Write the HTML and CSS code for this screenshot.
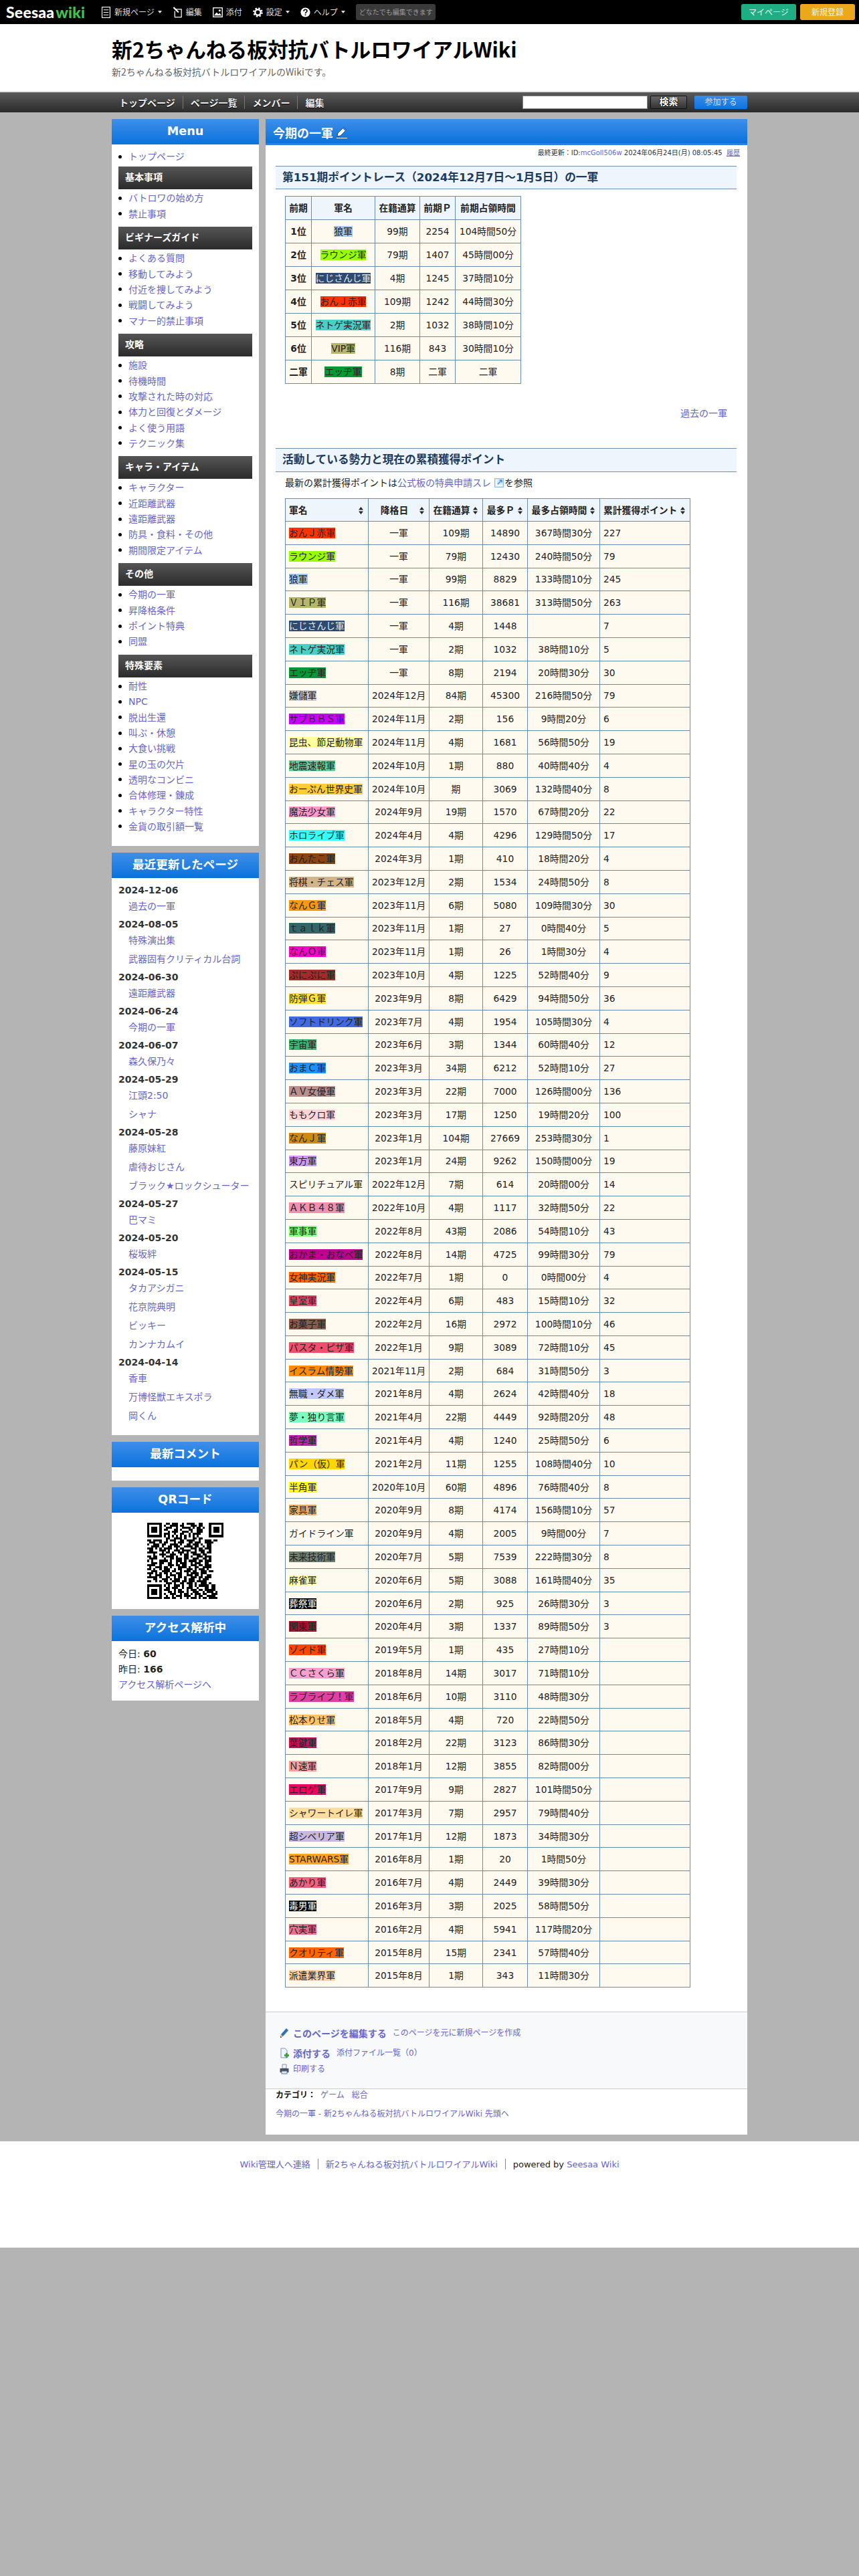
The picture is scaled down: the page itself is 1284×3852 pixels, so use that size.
FILE: index.html
```html
<!DOCTYPE html>
<html lang="ja">
<head>
<meta charset="utf-8">
<title>今期の一軍 - 新2ちゃんねる板対抗バトルロワイアルWiki</title>
<link rel="stylesheet" href="styles.css">
</head>
<body>
<header class="topbar">
  <a class="logo"><span class="logo-a">Seesaa</span><span class="logo-b">wiki</span></a>
  <nav class="tools">
    <a class="tool"><svg class="ti" viewBox="0 0 14 18"><rect x="0.7" y="0.7" width="12.6" height="16.6" fill="none" stroke="#fff" stroke-width="1.2"/><path d="M3 5h8M3 9h8M3 13h8" stroke="#fff" stroke-width="1.2"/></svg>新規ページ<i class="caret"></i></a>
    <a class="tool"><svg class="ti" viewBox="0 0 15 18"><path d="M5 4H13.5V16.5H3V7" fill="none" stroke="#fff" stroke-width="1.3"/><path d="M1 1l8 8" stroke="#fff" stroke-width="2.2"/></svg>編集</a>
    <a class="tool"><svg class="ti" viewBox="0 0 16 16"><rect x="0.8" y="0.8" width="14.4" height="14.4" fill="none" stroke="#fff" stroke-width="1.4"/><path d="M2 13l4-5 3 3 2-2 3 4z" fill="#fff"/><circle cx="11" cy="5" r="1.6" fill="#fff"/></svg>添付</a>
    <a class="tool"><svg class="ti" viewBox="0 0 18 18"><circle cx="9" cy="9" r="5" fill="none" stroke="#fff" stroke-width="3"/><circle cx="9" cy="9" r="7.5" fill="none" stroke="#fff" stroke-width="2.4" stroke-dasharray="3 2.9"/></svg>設定<i class="caret"></i></a>
    <a class="tool"><svg class="ti" viewBox="0 0 18 18"><circle cx="9" cy="9" r="8.5" fill="#fff"/><path d="M6 7c0-4 6-4 6-.5 0 2-3 2-3 4.500" fill="none" stroke="#000" stroke-width="2"/><rect x="8" y="12.500" width="2" height="2" fill="#000"/></svg>ヘルプ<i class="caret"></i></a>
    <span class="notice">どなたでも編集できます</span>
  </nav>
  <a class="btn btn-my">マイページ</a>
  <a class="btn btn-new">新規登録</a>
</header>

<div class="masthead">
  <h1 class="site-title">新2ちゃんねる板対抗バトルロワイアルWiki</h1>
  <p class="site-desc">新2ちゃんねる板対抗バトルロワイアルのWikiです。</p>
</div>

<div class="navbar">
  <div class="navbar-in">
    <a class="nav-item">トップページ</a><a class="nav-item">ページ一覧</a><a class="nav-item">メンバー</a><a class="nav-item nav-last">編集</a>
    <span class="nav-search"><span class="search-input"></span><span class="search-btn">検索</span><span class="join-btn">参加する</span></span>
  </div>
</div>

<div class="wrap">
  <aside class="side">
    <section class="panel">
      <h3 class="panel-h">Menu</h3>
      <div class="menu-body">
        <ul class="list first"><li><a>トップページ</a></li></ul>
        <h4 class="bar">基本事項</h4>
        <ul class="list"><li><a>バトロワの始め方</a></li><li><a>禁止事項</a></li></ul>
        <h4 class="bar">ビギナーズガイド</h4>
        <ul class="list"><li><a>よくある質問</a></li><li><a>移動してみよう</a></li><li><a>付近を捜してみよう</a></li><li><a>戦闘してみよう</a></li><li><a>マナー的禁止事項</a></li></ul>
        <h4 class="bar">攻略</h4>
        <ul class="list"><li><a>施設</a></li><li><a>待機時間</a></li><li><a>攻撃された時の対応</a></li><li><a>体力と回復とダメージ</a></li><li><a>よく使う用語</a></li><li><a>テクニック集</a></li></ul>
        <h4 class="bar">キャラ・アイテム</h4>
        <ul class="list"><li><a>キャラクター</a></li><li><a>近距離武器</a></li><li><a>遠距離武器</a></li><li><a>防具・食料・その他</a></li><li><a>期間限定アイテム</a></li></ul>
        <h4 class="bar">その他</h4>
        <ul class="list"><li><a>今期の一軍</a></li><li><a>昇降格条件</a></li><li><a>ポイント特典</a></li><li><a>同盟</a></li></ul>
        <h4 class="bar">特殊要素</h4>
        <ul class="list"><li><a>耐性</a></li><li><a>NPC</a></li><li><a>脱出生還</a></li><li><a>叫ぶ・休憩</a></li><li><a>大食い挑戦</a></li><li><a>星の玉の欠片</a></li><li><a>透明なコンビニ</a></li><li><a>合体修理・錬成</a></li><li><a>キャラクター特性</a></li><li><a>金貨の取引額一覧</a></li></ul>
      </div>
    </section>

    <section class="panel">
      <h3 class="panel-h">最近更新したページ</h3>
      <dl class="recent">
        <dt>2024-12-06</dt><dd><a>過去の一軍</a></dd>
        <dt>2024-08-05</dt><dd><a>特殊演出集</a></dd><dd><a>武器固有クリティカル台詞</a></dd>
        <dt>2024-06-30</dt><dd><a>遠距離武器</a></dd>
        <dt>2024-06-24</dt><dd><a>今期の一軍</a></dd>
        <dt>2024-06-07</dt><dd><a>森久保乃々</a></dd>
        <dt>2024-05-29</dt><dd><a>江頭2:50</a></dd><dd><a>シャナ</a></dd>
        <dt>2024-05-28</dt><dd><a>藤原妹紅</a></dd><dd><a>虐待おじさん</a></dd><dd><a>ブラック★ロックシューター</a></dd>
        <dt>2024-05-27</dt><dd><a>巴マミ</a></dd>
        <dt>2024-05-20</dt><dd><a>桜坂絆</a></dd>
        <dt>2024-05-15</dt><dd><a>タカアシガニ</a></dd><dd><a>花京院典明</a></dd><dd><a>ビッキー</a></dd><dd><a>カンナカムイ</a></dd>
        <dt>2024-04-14</dt><dd><a>香車</a></dd><dd><a>万博怪獣エキスポラ</a></dd><dd><a>岡くん</a></dd>
      </dl>
    </section>

    <section class="panel">
      <h3 class="panel-h">最新コメント</h3>
      <div class="empty-body"></div>
    </section>

    <section class="panel">
      <h3 class="panel-h">QRコード</h3>
      <div class="qr-body">
        <svg class="qr" viewBox="0 0 37 37" shape-rendering="crispEdges">
          <g fill="none" stroke="#000" stroke-width="1">
            <path d="M0 .5h7M30 .5h7M0 6.500h7M30 6.500h7M0 30.500h7M0 36.500h7M.5 1v5M6.500 1v5M30.500 1v5M36.500 1v5M.5 31v5M6.500 31v5M2 3.500h3M2 2.500h3M2 4.500h3M32 2.500h3M32 3.500h3M32 4.500h3M2 32.500h3M2 33.500h3M2 34.500h3"/>
            <path d="M9 .5h2m1 0h3m2 0h1m1 0h4m2 0h2M8 1.500h1m2 0h4m1 0h2m3 0h3m1 0h2M9 2.500h3m2 0h1m2 0h4m1 0h1m1 0h2m1 0h1M8 3.500h2m3 0h2m1 0h1m3 0h2m2 0h3M10 4.500h1m1 0h3m2 0h3m1 0h1m2 0h3M8 5.500h3m2 0h1m2 0h2m2 0h1m1 0h4M8 6.500h1m1 0h1m1 0h1m1 0h1m1 0h1m1 0h1m1 0h1m1 0h1m1 0h1M9 7.500h2m2 0h4m1 0h1m3 0h2m1 0h2"/>
            <path d="M0 8.500h2m1 0h4m2 0h1m1 0h3m2 0h2m1 0h4m2 0h1m2 0h3m1 0h2M1 9.500h3m2 0h1m1 0h2m3 0h1m1 0h3m2 0h2m1 0h3m2 0h4M0 10.500h1m2 0h3m1 0h2m2 0h4m1 0h1m2 0h2m1 0h3m1 0h1m2 0h2M2 11.500h4m1 0h1m2 0h2m1 0h3m2 0h4m1 0h2m2 0h1m1 0h2M0 12.500h3m1 0h1m1 0h1m1 0h4m2 0h1m1 0h2m3 0h3m1 0h2m1 0h3M1 13.500h2m3 0h3m1 0h1m2 0h3m1 0h4m2 0h1m1 0h3m2 0h1M0 14.500h5m2 0h1m1 0h2m1 0h1m2 0h3m1 0h1m1 0h3m2 0h2m1 0h2M3 15.500h1m2 0h3m2 0h3m2 0h1m1 0h2m2 0h4m1 0h2M0 16.500h2m1 0h2m2 0h1m1 0h4m1 0h1m3 0h2m1 0h1m2 0h3m1 0h3M1 17.500h4m3 0h1m2 0h2m1 0h3m1 0h2m2 0h3m2 0h2m1 0h1M0 18.500h1m1 0h1m3 0h4m1 0h1m2 0h3m1 0h1m1 0h4m1 0h2m1 0h3M2 19.500h3m1 0h2m2 0h2m2 0h1m1 0h3m2 0h1m1 0h3m2 0h2M0 20.500h4m2 0h1m3 0h3m1 0h2m1 0h2m2 0h3m1 0h2m1 0h3M1 21.500h1m2 0h3m1 0h2m1 0h1m3 0h4m1 0h1m2 0h2m2 0h4M0 22.500h2m1 0h1m2 0h1m1 0h3m2 0h1m1 0h2m2 0h3m1 0h1m1 0h3m1 0h1M2 23.500h3m2 0h4m1 0h2m2 0h1m1 0h3m1 0h2m2 0h3m1 0h2M0 24.500h3m1 0h1m1 0h1m1 0h2m1 0h1m2 0h3m2 0h1m1 0h4m1 0h3M1 25.500h1m2 0h3m2 0h1m1 0h3m1 0h2m2 0h3m1 0h2m1 0h1m2 0h2M0 26.500h5m1 0h1m2 0h2m2 0h1m1 0h2m1 0h1m2 0h3m1 0h2m1 0h3M3 27.500h2m2 0h3m1 0h1m1 0h3m2 0h1m1 0h3m2 0h1m1 0h3M0 28.500h2m2 0h1m1 0h1m1 0h2m2 0h4m1 0h2m1 0h3m1 0h5"/>
            <path d="M9 29.500h3m1 0h1m2 0h2m1 0h3m1 0h1m2 0h3m1 0h1M8 30.500h1m1 0h1m2 0h3m1 0h1m2 0h2m1 0h1m1 0h5m1 0h2M9 31.500h2m1 0h3m2 0h1m1 0h3m2 0h1m3 0h2m1 0h2M8 32.500h3m2 0h1m1 0h2m2 0h1m1 0h3m1 0h2m1 0h5M10 33.500h2m1 0h1m1 0h3m1 0h1m2 0h3m2 0h1m1 0h3m1 0h1M8 34.500h1m2 0h3m2 0h1m1 0h2m1 0h1m1 0h3m1 0h2m2 0h3M9 35.500h1m2 0h1m1 0h3m1 0h3m2 0h1m1 0h2m2 0h4M8 36.500h3m1 0h2m2 0h1m2 0h1m1 0h3m1 0h1m1 0h2m1 0h4"/>
          </g>
        </svg>
      </div>
    </section>

    <section class="panel">
      <h3 class="panel-h">アクセス解析中</h3>
      <div class="access">
        <p>今日: <b>60</b></p>
        <p>昨日: <b>166</b></p>
        <p><a>アクセス解析ページへ</a></p>
      </div>
    </section>
  </aside>

  <main class="main">
    <div class="main-h"><h2 class="main-title">今期の一軍</h2><svg class="pen" viewBox="0 0 16 18"><path d="M11 1l4 4-9 9-5 1 1-5z" fill="#fff" stroke="#17457a" stroke-width="1"/><path d="M11 1l4 4-2 2-4-4z" fill="#3f7fd0"/><path d="M0 17.500h16" stroke="#fff" stroke-width="1"/></svg></div>
    <div class="updated">最終更新&#xFF1A;ID:<a>mcGoll506w</a> 2024年06月24日(月) 08:05:45 &nbsp;<a class="u">履歴</a></div>
    <div class="content">
      <h2 class="sec">第151期ポイントレース&#xFF08;2024年12月7日&#xFF5E;1月5日&#xFF09;の一軍</h2>
      <table class="t t-first">
        <thead><tr><th>前期</th><th>軍名</th><th>在籍通算</th><th>前期&#xFF30;</th><th>前期占領時間</th></tr></thead>
        <tbody>
          <tr><td class="b">1位</td><td><span class="g g3">狼軍</span></td><td>99期</td><td>2254</td><td>104時間50分</td></tr>
          <tr><td class="b">2位</td><td><span class="g g2">ラウンジ軍</span></td><td>79期</td><td>1407</td><td>45時間00分</td></tr>
          <tr><td class="b">3位</td><td><span class="g g5">にじさんじ軍</span></td><td>4期</td><td>1245</td><td>37時間10分</td></tr>
          <tr><td class="b">4位</td><td><span class="g g1">おん&#xFF2A;赤軍</span></td><td>109期</td><td>1242</td><td>44時間30分</td></tr>
          <tr><td class="b">5位</td><td><span class="g g6">ネトゲ実況軍</span></td><td>2期</td><td>1032</td><td>38時間10分</td></tr>
          <tr><td class="b">6位</td><td><span class="g g4">VIP軍</span></td><td>116期</td><td>843</td><td>30時間10分</td></tr>
          <tr><td class="b">二軍</td><td><span class="g g7">エッヂ軍</span></td><td>8期</td><td>二軍</td><td>二軍</td></tr>
        </tbody>
      </table>
      <p class="past"><a>過去の一軍</a></p>
      <h2 class="sec sec-2">活動している勢力と現在の累積獲得ポイント</h2>
      <p class="intro">最新の累計獲得ポイントは<a>公式板の特典申請スレ</a><svg class="ext" viewBox="0 0 14 14"><rect x="0.5" y="0.5" width="13" height="13" fill="#cfe6f8" stroke="#8fc0ea"/><path d="M5 3H3v8h8V9" fill="none" stroke="#fff" stroke-width="1.500"/><path d="M5 9l6-6M7.500 3H11v3.500" fill="none" stroke="#4a90d9" stroke-width="1.500"/></svg>を参照</p>
      <table class="t t-rank">
        <thead><tr>
          <th class="th-l">軍名<svg class="sort" viewBox="0 0 7 11"><path d="M3.500 0l3.500 4.500H0zM3.500 11L0 6.500h7z"/></svg></th>
          <th>降格日<svg class="sort" viewBox="0 0 7 11"><path d="M3.500 0l3.500 4.500H0zM3.500 11L0 6.500h7z"/></svg></th>
          <th>在籍通算<svg class="sort" viewBox="0 0 7 11"><path d="M3.500 0l3.500 4.500H0zM3.500 11L0 6.500h7z"/></svg></th>
          <th>最多&#xFF30;<svg class="sort" viewBox="0 0 7 11"><path d="M3.500 0l3.500 4.500H0zM3.500 11L0 6.500h7z"/></svg></th>
          <th>最多占領時間<svg class="sort" viewBox="0 0 7 11"><path d="M3.500 0l3.500 4.500H0zM3.500 11L0 6.500h7z"/></svg></th>
          <th class="th-l">累計獲得ポイント<svg class="sort" viewBox="0 0 7 11"><path d="M3.500 0l3.500 4.500H0zM3.500 11L0 6.500h7z"/></svg></th>
        </tr></thead>
        <tbody>
<tr><td><span class="g g1">おん&#xFF2A;赤軍</span></td><td>一軍</td><td>109期</td><td>14890</td><td>367時間30分</td><td>227</td></tr>
<tr><td><span class="g g2">ラウンジ軍</span></td><td>一軍</td><td>79期</td><td>12430</td><td>240時間50分</td><td>79</td></tr>
<tr><td><span class="g g3">狼軍</span></td><td>一軍</td><td>99期</td><td>8829</td><td>133時間10分</td><td>245</td></tr>
<tr><td><span class="g g4">&#xFF36;&#xFF29;&#xFF30;軍</span></td><td>一軍</td><td>116期</td><td>38681</td><td>313時間50分</td><td>263</td></tr>
<tr><td><span class="g g5">にじさんじ軍</span></td><td>一軍</td><td>4期</td><td>1448</td><td></td><td>7</td></tr>
<tr><td><span class="g g6">ネトゲ実況軍</span></td><td>一軍</td><td>2期</td><td>1032</td><td>38時間10分</td><td>5</td></tr>
<tr><td><span class="g g7">エッヂ軍</span></td><td>一軍</td><td>8期</td><td>2194</td><td>20時間30分</td><td>30</td></tr>
<tr><td><span class="g g8">嫌儲軍</span></td><td>2024年12月</td><td>84期</td><td>45300</td><td>216時間50分</td><td>79</td></tr>
<tr><td><span class="g g9">サブ&#xFF22;&#xFF22;&#xFF33;軍</span></td><td>2024年11月</td><td>2期</td><td>156</td><td>9時間20分</td><td>6</td></tr>
<tr><td><span class="g g10">昆虫、節足動物軍</span></td><td>2024年11月</td><td>4期</td><td>1681</td><td>56時間50分</td><td>19</td></tr>
<tr><td><span class="g g11">地震速報軍</span></td><td>2024年10月</td><td>1期</td><td>880</td><td>40時間40分</td><td>4</td></tr>
<tr><td><span class="g g12">おーぷん世界史軍</span></td><td>2024年10月</td><td>期</td><td>3069</td><td>132時間40分</td><td>8</td></tr>
<tr><td><span class="g g13">魔法少女軍</span></td><td>2024年9月</td><td>19期</td><td>1570</td><td>67時間20分</td><td>22</td></tr>
<tr><td><span class="g g14">ホロライブ軍</span></td><td>2024年4月</td><td>4期</td><td>4296</td><td>129時間50分</td><td>17</td></tr>
<tr><td><span class="g g15">おんたこ軍</span></td><td>2024年3月</td><td>1期</td><td>410</td><td>18時間20分</td><td>4</td></tr>
<tr><td><span class="g g16">将棋・チェス軍</span></td><td>2023年12月</td><td>2期</td><td>1534</td><td>24時間50分</td><td>8</td></tr>
<tr><td><span class="g g17">なん&#xFF27;軍</span></td><td>2023年11月</td><td>6期</td><td>5080</td><td>109時間30分</td><td>30</td></tr>
<tr><td><span class="g g18">&#xFF54;&#xFF41;&#xFF4C;&#xFF4B;軍</span></td><td>2023年11月</td><td>1期</td><td>27</td><td>0時間40分</td><td>5</td></tr>
<tr><td><span class="g g19">なん&#xFF2F;軍</span></td><td>2023年11月</td><td>1期</td><td>26</td><td>1時間30分</td><td>4</td></tr>
<tr><td><span class="g g20">ぷにぷに軍</span></td><td>2023年10月</td><td>4期</td><td>1225</td><td>52時間40分</td><td>9</td></tr>
<tr><td><span class="g g21">防弾&#xFF27;軍</span></td><td>2023年9月</td><td>8期</td><td>6429</td><td>94時間50分</td><td>36</td></tr>
<tr><td><span class="g g22">ソフトドリンク軍</span></td><td>2023年7月</td><td>4期</td><td>1954</td><td>105時間30分</td><td>4</td></tr>
<tr><td><span class="g g23">宇宙軍</span></td><td>2023年6月</td><td>3期</td><td>1344</td><td>60時間40分</td><td>12</td></tr>
<tr><td><span class="g g24">おま&#xFF23;軍</span></td><td>2023年3月</td><td>34期</td><td>6212</td><td>52時間10分</td><td>27</td></tr>
<tr><td><span class="g g25">&#xFF21;&#xFF36;女優軍</span></td><td>2023年3月</td><td>22期</td><td>7000</td><td>126時間00分</td><td>136</td></tr>
<tr><td><span class="g g26">ももクロ軍</span></td><td>2023年3月</td><td>17期</td><td>1250</td><td>19時間20分</td><td>100</td></tr>
<tr><td><span class="g g27">なん&#xFF2A;軍</span></td><td>2023年1月</td><td>104期</td><td>27669</td><td>253時間30分</td><td>1</td></tr>
<tr><td><span class="g g28">東方軍</span></td><td>2023年1月</td><td>24期</td><td>9262</td><td>150時間00分</td><td>19</td></tr>
<tr><td><span class="g">スピリチュアル軍</span></td><td>2022年12月</td><td>7期</td><td>614</td><td>20時間00分</td><td>14</td></tr>
<tr><td><span class="g g30">&#xFF21;&#xFF2B;&#xFF22;&#xFF14;&#xFF18;軍</span></td><td>2022年10月</td><td>4期</td><td>1117</td><td>32時間50分</td><td>22</td></tr>
<tr><td><span class="g g31">軍事軍</span></td><td>2022年8月</td><td>43期</td><td>2086</td><td>54時間10分</td><td>43</td></tr>
<tr><td><span class="g g32">おかま・おなべ軍</span></td><td>2022年8月</td><td>14期</td><td>4725</td><td>99時間30分</td><td>79</td></tr>
<tr><td><span class="g g33">女神実況軍</span></td><td>2022年7月</td><td>1期</td><td>0</td><td>0時間00分</td><td>4</td></tr>
<tr><td><span class="g g34">皇室軍</span></td><td>2022年4月</td><td>6期</td><td>483</td><td>15時間10分</td><td>32</td></tr>
<tr><td><span class="g g35">お菓子軍</span></td><td>2022年2月</td><td>16期</td><td>2972</td><td>100時間10分</td><td>46</td></tr>
<tr><td><span class="g g36">パスタ・ピザ軍</span></td><td>2022年1月</td><td>9期</td><td>3089</td><td>72時間10分</td><td>45</td></tr>
<tr><td><span class="g g37">イスラム情勢軍</span></td><td>2021年11月</td><td>2期</td><td>684</td><td>31時間50分</td><td>3</td></tr>
<tr><td><span class="g g38">無職・ダメ軍</span></td><td>2021年8月</td><td>4期</td><td>2624</td><td>42時間40分</td><td>18</td></tr>
<tr><td><span class="g g39">夢・独り言軍</span></td><td>2021年4月</td><td>22期</td><td>4449</td><td>92時間20分</td><td>48</td></tr>
<tr><td><span class="g g40">哲学軍</span></td><td>2021年4月</td><td>4期</td><td>1240</td><td>25時間50分</td><td>6</td></tr>
<tr><td><span class="g g41">パン&#xFF08;仮&#xFF09;軍</span></td><td>2021年2月</td><td>11期</td><td>1255</td><td>108時間40分</td><td>10</td></tr>
<tr><td><span class="g g42">半角軍</span></td><td>2020年10月</td><td>60期</td><td>4896</td><td>76時間40分</td><td>8</td></tr>
<tr><td><span class="g g43">家具軍</span></td><td>2020年9月</td><td>8期</td><td>4174</td><td>156時間10分</td><td>57</td></tr>
<tr><td><span class="g">ガイドライン軍</span></td><td>2020年9月</td><td>4期</td><td>2005</td><td>9時間00分</td><td>7</td></tr>
<tr><td><span class="g g45">未来技術軍</span></td><td>2020年7月</td><td>5期</td><td>7539</td><td>222時間30分</td><td>8</td></tr>
<tr><td><span class="g g46">麻雀軍</span></td><td>2020年6月</td><td>5期</td><td>3088</td><td>161時間40分</td><td>35</td></tr>
<tr><td><span class="g g47">葬祭軍</span></td><td>2020年6月</td><td>2期</td><td>925</td><td>26時間30分</td><td>3</td></tr>
<tr><td><span class="g g48">関東軍</span></td><td>2020年4月</td><td>3期</td><td>1337</td><td>89時間50分</td><td>3</td></tr>
<tr><td><span class="g g49">ゾイド軍</span></td><td>2019年5月</td><td>1期</td><td>435</td><td>27時間10分</td><td></td></tr>
<tr><td><span class="g g50">&#xFF23;&#xFF23;さくら軍</span></td><td>2018年8月</td><td>14期</td><td>3017</td><td>71時間10分</td><td></td></tr>
<tr><td><span class="g g51">ラブライブ&#xFF01;軍</span></td><td>2018年6月</td><td>10期</td><td>3110</td><td>48時間30分</td><td></td></tr>
<tr><td><span class="g g52">松本りせ軍</span></td><td>2018年5月</td><td>4期</td><td>720</td><td>22時間50分</td><td></td></tr>
<tr><td><span class="g g53">葉鍵軍</span></td><td>2018年2月</td><td>22期</td><td>3123</td><td>86時間30分</td><td></td></tr>
<tr><td><span class="g g54">&#xFF2E;速軍</span></td><td>2018年1月</td><td>12期</td><td>3855</td><td>82時間00分</td><td></td></tr>
<tr><td><span class="g g55">エロゲ軍</span></td><td>2017年9月</td><td>9期</td><td>2827</td><td>101時間50分</td><td></td></tr>
<tr><td><span class="g g56">シャワートイレ軍</span></td><td>2017年3月</td><td>7期</td><td>2957</td><td>79時間40分</td><td></td></tr>
<tr><td><span class="g g57">超シベリア軍</span></td><td>2017年1月</td><td>12期</td><td>1873</td><td>34時間30分</td><td></td></tr>
<tr><td><span class="g g58">STARWARS軍</span></td><td>2016年8月</td><td>1期</td><td>20</td><td>1時間50分</td><td></td></tr>
<tr><td><span class="g g59">あかり軍</span></td><td>2016年7月</td><td>4期</td><td>2449</td><td>39時間30分</td><td></td></tr>
<tr><td><span class="g g47">毒男軍</span></td><td>2016年3月</td><td>3期</td><td>2025</td><td>58時間50分</td><td></td></tr>
<tr><td><span class="g g61">穴実軍</span></td><td>2016年2月</td><td>4期</td><td>5941</td><td>117時間20分</td><td></td></tr>
<tr><td><span class="g g62">クオリティ軍</span></td><td>2015年8月</td><td>15期</td><td>2341</td><td>57時間40分</td><td></td></tr>
<tr><td><span class="g g63">派遣業界軍</span></td><td>2015年8月</td><td>1期</td><td>343</td><td>11時間30分</td><td></td></tr>
        </tbody>
      </table>
    </div>
    <div class="edit-box">
      <div class="edit-row er-1"><svg class="ei" viewBox="0 0 14 16"><path d="M10 1l3 3-8 9-4 2 1-5z" fill="#2f6fc4"/><path d="M1 15l1-5 3 3z" fill="#e8c08a"/><path d="M1 15l.5-2 1.500 1.500z" fill="#000"/></svg><a class="big">このページを編集する</a><a class="small">このページを元に新規ページを作成</a></div>
      <div class="edit-row er-2"><svg class="ei" viewBox="0 0 14 16"><path d="M2 1h6l3 3v11H2z" fill="#eef4fa" stroke="#7f97b5"/><rect x="7" y="10" width="7" height="3" fill="#3aa83a"/><rect x="9" y="8" width="3" height="7" fill="#3aa83a"/></svg><a class="big">添付する</a><a class="small">添付ファイル一覧&#xFF08;0&#xFF09;</a></div>
      <div class="edit-row er-3"><svg class="ei" viewBox="0 0 14 16"><path d="M4 1h6v6H4z" fill="#eef4fa" stroke="#7f97b5"/><rect x="0.500" y="7" width="13" height="6" fill="#4a4f59"/><rect x="3" y="11" width="8" height="4" fill="#dfe7ef" stroke="#5b7fa8"/></svg><a class="small">印刷する</a></div>
    </div>
    <div class="page-foot">
      <p class="cats"><b>カテゴリ&#xFF1A;</b><a>ゲーム</a><a>総合</a></p>
      <p class="toplink"><a>今期の一軍 - 新2ちゃんねる板対抗バトルロワイアルWiki 先頭へ</a></p>
    </div>
  </main>
</div>

<footer class="footer">
  <a>Wiki管理人へ連絡</a><span class="fsep"></span><a>新2ちゃんねる板対抗バトルロワイアルWiki</a><span class="fsep"></span>powered by <a>Seesaa Wiki</a>
</footer>
</body>
</html>
```
FILE: styles.css
```css
* { box-sizing: border-box; }
html { background: #b4b4b4; }
body {
  margin: 0;
  background: #b4b4b4;
  color: #222;
  font-family: "DejaVu Sans", "Noto Sans CJK JP", sans-serif;
  font-size: 14px;
  line-height: 20px;
}
a { color: #6666cc; text-decoration: none; }
p, h1, h2, h3, h4, ul, dl, dd { margin: 0; padding: 0; }

/* top bar */
.topbar {
  height: 36px;
  background: #000;
  display: flex;
  align-items: center;
  padding: 0 6px 0 9px;
}
.logo { width: 142px; font-family: "Lato", sans-serif; font-weight: 900; font-size: 23px; letter-spacing: 0.2px; line-height: 36px; }
.logo-a { color: #fff; margin-right: 2px; }
.logo-b { color: #3fc64a; }
.tools { display: flex; align-items: center; flex: 1; font-family: "Noto Sans CJK JP", sans-serif; font-size: 12px; color: #ddd; }
.tool { display: flex; align-items: center; color: #ddd; margin-right: 16px; }
.ti { width: 15px; height: 17px; margin-right: 5px; }
.caret { width: 0; height: 0; border-left: 3.5px solid transparent; border-right: 3.5px solid transparent; border-top: 4px solid #ddd; margin-left: 5px; }
.notice { width: 119px; height: 24px; background: #3a3a3a; border-radius: 3px; color: #999; font-size: 10px; line-height: 24px; padding-left: 5px; white-space: nowrap; overflow: hidden; }
.btn { width: 82px; height: 24px; border-radius: 3px; color: #e8f5ef; font-family: "Noto Sans CJK JP", sans-serif; font-size: 12px; line-height: 24px; text-align: center; margin-left: 6px; }
.btn-my { background: #1fae84; }
.btn-new { background: #eca71a; }

/* masthead */
.masthead { height: 102px; background: #fff; border-bottom: 2px solid #e2e2e2; padding: 15px 0 0 167px; }
.site-title { font-family: "Noto Sans CJK JP", sans-serif; font-size: 30.7px; font-weight: 700; line-height: 44px; color: #000; white-space: nowrap; }
.site-desc { font-family: "Noto Sans CJK JP", sans-serif; font-size: 14px; line-height: 20px; margin-top: 2px; color: #666; }

/* nav */
.navbar { height: 30px; background: linear-gradient(#5a5a5a, #2a2a2a); }
.navbar-in { width: 950px; margin-left: 167px; height: 30px; display: flex; align-items: center; }
.nav-item { color: #eee; font-weight: 700; font-size: 14px; font-family: "Noto Sans CJK JP", sans-serif; line-height: 20px; padding: 0 11px; border-right: 1px solid #777; text-shadow: 0 1px 1px #000; }
.nav-last { border-right: 0; }
.nav-search { margin-left: auto; display: flex; }
.search-input { width: 187px; height: 20px; background: #fff; border: 1px solid #888; }
.search-btn { width: 55px; height: 20px; margin-left: 4px; background: linear-gradient(#666, #333); border: 1px solid #111; border-radius: 2px; color: #fff; font-weight: 700; font-size: 14px; line-height: 17px; text-align: center; text-shadow: 1px 0 0 #000, -1px 0 0 #000, 0 1px 0 #000; }
.join-btn { width: 79px; height: 20px; margin-left: 11px; background: linear-gradient(#3a8ce6, #0b74e0); border-radius: 2px; color: #dde; font-size: 12px; line-height: 20px; text-align: center; }

/* page grid */
.wrap { width: 950px; margin: 10px 0 0 167px; display: flex; gap: 10px; align-items: flex-start; }
.side { width: 220px; flex: none; }
.main { width: 720px; flex: none; background: #fff; }

/* side panels */
.panel { background: #fff; margin-bottom: 10px; }
.panel-h { height: 38px; background: linear-gradient(#3f8fe8, #0a72dd); color: #fff; font-size: 17.6px; font-weight: 700; line-height: 36px; text-align: center; }
.menu-body { padding: 7.3px 10px 9.4px; }
.list { list-style: none; margin: 2.3px 0 7px; line-height: 23.33px; }
.list.first { margin: 0 0 2.4px; }
.list li::before { content: ""; display: inline-block; width: 5px; height: 5px; border-radius: 50%; background: #000; margin: 0 10px 2px 0; vertical-align: middle; }
.bar { height: 34px; padding-left: 10px; background: linear-gradient(#555, #2b2b2b); color: #fff; font-size: 14px; font-weight: 700; line-height: 32px; }
.recent { padding: 5px 10px 15.5px; }
.recent dt { margin-top: 3px; font-weight: 700; line-height: 20px; color: #333; }
.recent dd { padding-left: 15px; line-height: 28px; white-space: nowrap; }
.empty-body { height: 20px; }
.qr-body { height: 144px; padding-top: 15px; }
.qr { display: block; width: 114px; height: 114px; margin-left: 53px; }
.access { padding: 7.5px 10px 12.5px; line-height: 23px; color: #222; }

/* main */
.main-h { height: 39px; display: flex; align-items: center; padding-left: 11px; background: linear-gradient(#3f8fe8 0, #0a72dd 92%, #2a80e0 92%); }
.main-title { color: #fff; font-family: "Noto Sans CJK JP", sans-serif; font-size: 18px; font-weight: 700; line-height: 36px; }
.pen { width: 16px; height: 18px; margin-left: 5px; }
.updated { font-size: 10px; line-height: 16px; margin-top: 4px; padding-right: 11px; text-align: right; color: #333; }
.u { text-decoration: underline; }
.content { padding: 0 16px 0 15px; }
.sec { height: 35px; margin-top: 11px; padding-left: 10px; background: #eef5fc; border-top: 1px solid #6f8fb0; border-bottom: 1px solid #6f8fb0; color: #1d3a5f; font-size: 16.7px; font-weight: 700; line-height: 32px; white-space: nowrap; }
.sec-2 { height: 36px; margin-top: 40.5px; }
.past { margin-top: 32.5px; line-height: 23px; text-align: right; padding-right: 14px; }
.intro { margin: 6px 0 13px 14px; line-height: 20px; display: flex; align-items: center; }
.ext { width: 14px; height: 14px; margin: 0 1px 0 5px; }

.t { border-collapse: collapse; table-layout: fixed; margin-left: 14px; font-size: 13.8px; line-height: 20px; }
.t th, .t td { border: 1px solid #6a8caf; padding: 0 5px; text-align: center; white-space: nowrap; }
.t th { background: #eef6fc; font-weight: 700; height: 34px; color: #222; position: relative; }
.t td { background: #fffaf0; height: 34.8px; color: #222; }
.t-first { width: 352px; margin-top: 10px; }
.t-first th { height: 35px; }
.t-first td { height: 35px; }
.t-first th:nth-child(1) { width: 39px; }
.t-first th:nth-child(2) { width: 95px; }
.t-first th:nth-child(3) { width: 67px; }
.t-first th:nth-child(4) { width: 53px; }
.t-first th:nth-child(5) { width: 98px; }
.b { font-weight: 700; }
.t-rank { width: 605px; }
.t-rank th { padding: 0 18px 0 5px; }
.t-rank th.th-l { text-align: left; }
.t-rank td:first-child, .t-rank td:last-child { text-align: left; }
.t-rank th:nth-child(1) { width: 124px; }
.t-rank th:nth-child(2) { width: 91px; }
.t-rank th:nth-child(3) { width: 80px; }
.t-rank th:nth-child(4) { width: 67px; }
.t-rank th:nth-child(5) { width: 108px; }
.t-rank th:nth-child(6) { width: 135px; }
.sort { position: absolute; right: 7px; top: 12px; width: 7px; height: 11px; fill: #222; }

/* faction colours */
.g { display: inline-block; line-height: 16px; color: #222; }
.g1 { background: #ff3300; } .g2 { background: #99ff00; } .g3 { background: #a4c8ef; }
.g4 { background: #b5b56f; } .g5 { background: #2f4a6f; color: #e4e8f0; } .g6 { background: #48cfc8; }
.g7 { background: #009933; } .g8 { background: #cccccc; } .g9 { background: #cc00ff; }
.g10 { background: #ffff99; } .g11 { background: #66cc99; } .g12 { background: #ffcc33; }
.g13 { background: #ff99cc; } .g14 { background: #33ffff; } .g15 { background: #8b4513; }
.g16 { background: #d2b48c; } .g17 { background: #f59a10; } .g18 { background: #336666; }
.g19 { background: #ff00cc; } .g20 { background: #a52a2a; } .g21 { background: #ffe135; }
.g22 { background: #4169e1; } .g23 { background: #3cb371; } .g24 { background: #1e90ff; }
.g25 { background: #bc8f8f; } .g26 { background: #ffd4d9; } .g27 { background: #cc8b0f; }
.g28 { background: #cc99ff; } .g30 { background: #f08fb0; } .g31 { background: #80ff80; }
.g32 { background: #c00090; } .g33 { background: #ff6600; } .g34 { background: #e0506e; }
.g35 { background: #8b5a4a; } .g36 { background: #f04e6e; } .g37 { background: #ff8c00; }
.g38 { background: #c0c8ff; } .g39 { background: #7fffc0; } .g40 { background: #c020b0; }
.g41 { background: #ffd700; } .g42 { background: #ffff00; } .g43 { background: #e8b060; }
.g45 { background: #708070; } .g46 { background: #ffffb0; } .g47 { background: #000; color: #fff; }
.g48 { background: #b01030; } .g49 { background: #ff4500; } .g50 { background: #f4a0d0; }
.g51 { background: #e040a0; } .g52 { background: #fcc468; } .g53 { background: #d01060; }
.g54 { background: #f4a0a0; } .g55 { background: #f00060; } .g56 { background: #ffdd9c; }
.g57 { background: #c8b8e0; } .g58 { background: #ffa520; } .g59 { background: #f06080; }
.g61 { background: #e87090; } .g62 { background: #ff6600; } .g63 { background: #fcd0a0; }

/* edit box */
.edit-box { height: 116px; margin-top: 36px; padding: 19px 0 0 21px; background: #f8f9fa; border-top: 1px solid #ccc; border-bottom: 1px solid #ccc; }
.edit-row { display: flex; align-items: center; height: 24px; }
.er-1 { margin-bottom: 6px; }
.er-2 { margin-bottom: 1px; }
.er-3 { height: 22px; }
.ei { width: 14px; height: 16px; margin-right: 6px; }
.big { font-weight: 700; font-size: 14px; font-family: "Noto Sans CJK JP", sans-serif; margin-right: 9px; }
.small { font-size: 12px; }
.page-foot { padding: 0 0 22px 15px; font-size: 12px; line-height: 18px; }
.cats b { color: #111; margin-right: 7px; }
.cats a { margin-right: 11px; }
.toplink { margin-top: 10px; }

/* footer */
.footer { height: 159px; margin-top: 10px; padding-top: 26px; background: #fff; font-size: 13px; line-height: 18px; text-align: center; color: #222; }
.fsep { display: inline-block; width: 1px; height: 16px; background: #888; margin: 0 11px; vertical-align: -3px; }
```
